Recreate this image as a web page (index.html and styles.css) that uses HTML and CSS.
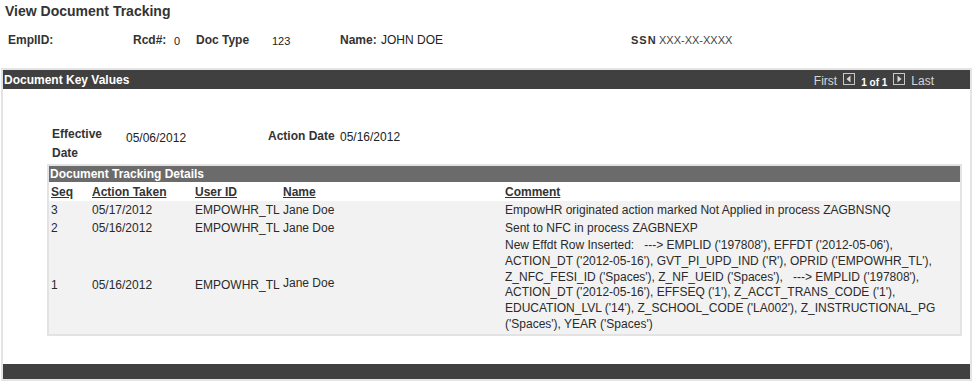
FILE: index.html
```html
<!DOCTYPE html>
<html>
<head>
<meta charset="utf-8">
<title>View Document Tracking</title>
<link rel="stylesheet" href="styles.css">
</head>
<body>
<div class="title">View Document Tracking</div>
<div class="keys">
  <span class="k w-emplid lbl">EmplID:</span>
  <span class="k w-rcd lbl">Rcd#:</span>
  <span class="k w-rcdv val sm">0</span>
  <span class="k w-doc lbl">Doc Type</span>
  <span class="k w-docv val sm">123</span>
  <span class="k w-name lbl">Name:</span>
  <span class="k w-namev val">JOHN DOE</span>
  <span class="k w-ssn lbl ssn">SSN</span>
  <span class="k val ssnv">XXX-XX-XXXX</span>
</div>

<div class="panel">
  <div class="panel-head">
    <span class="panel-title">Document Key Values</span>
    <span class="pager">
      <span class="pg-link">First</span>
      <svg class="pg-icon" width="12" height="12" viewBox="0 0 12 12"><rect x="0.5" y="0.5" width="11" height="11" fill="#404040" stroke="#c8c8c8"/><polygon points="7.5,2.5 7.5,9.5 3.5,6" fill="#d8d8d8"/></svg>
      <span class="pg-count">1 of 1</span>
      <svg class="pg-icon" width="12" height="12" viewBox="0 0 12 12"><rect x="0.5" y="0.5" width="11" height="11" fill="#404040" stroke="#c8c8c8"/><polygon points="4.5,2.5 4.5,9.5 8.5,6" fill="#d8d8d8"/></svg>
      <span class="pg-link">Last</span>
    </span>
  </div>
  <div class="panel-body">
    <div class="dates">
      <div class="d-lbl">Effective Date</div>
      <div class="d-val">05/06/2012</div>
      <div class="d-lbl2">Action Date</div>
      <div class="d-val2">05/16/2012</div>
    </div>
    <div class="details">
      <div class="details-head">Document Tracking Details</div>
      <table class="grid">
        <colgroup>
          <col class="c-seq"><col class="c-act"><col class="c-user"><col class="c-name"><col>
        </colgroup>
        <thead>
          <tr><th>Seq</th><th>Action Taken</th><th>User ID</th><th>Name</th><th>Comment</th></tr>
        </thead>
        <tbody>
          <tr><td>3</td><td>05/17/2012</td><td>EMPOWHR_TL</td><td>Jane Doe</td><td>EmpowHR originated action marked Not Applied in process ZAGBNSNQ</td></tr>
          <tr><td>2</td><td>05/16/2012</td><td>EMPOWHR_TL</td><td>Jane Doe</td><td>Sent to NFC in process ZAGBNEXP</td></tr>
          <tr><td>1</td><td>05/16/2012</td><td>EMPOWHR_TL</td><td><span class="up">Jane Doe</span></td><td class="comment">New Effdt Row Inserted: &nbsp; ---&gt; EMPLID ('197808'), EFFDT ('2012-05-06'),<br>ACTION_DT ('2012-05-16'), GVT_PI_UPD_IND ('R'), OPRID ('EMPOWHR_TL'),<br>Z_NFC_FESI_ID ('Spaces'), Z_NF_UEID ('Spaces'), &nbsp; ---&gt; EMPLID ('197808'),<br>ACTION_DT ('2012-05-16'), EFFSEQ ('1'), Z_ACCT_TRANS_CODE ('1'),<br>EDUCATION_LVL ('14'), Z_SCHOOL_CODE ('LA002'), Z_INSTRUCTIONAL_PG<br>('Spaces'), YEAR ('Spaces')</td></tr>
        </tbody>
      </table>
    </div>
  </div>
  <div class="panel-foot"></div>
</div>
</body>
</html>
```
FILE: styles.css
```css
body {
  margin: 0;
  font-family: "Liberation Sans", Arial, sans-serif;
  font-size: 12px;
  color: #333;
  background: #fff;
}
.title {
  font-size: 14px;
  font-weight: bold;
  line-height: 18px;
  padding: 2px 5px 0;
  color: #333;
}
.keys {
  display: flex;
  align-items: baseline;
  margin-top: 12px;
  padding-left: 8px;
  line-height: 16px;
}
.lbl { font-weight: bold; }
.val { color: #222; }
.sm { font-size: 11px; position: relative; top: 1px; }
.w-emplid { width: 125px; }
.w-rcd { width: 41px; }
.w-rcdv { width: 22px; }
.w-doc { width: 76px; }
.w-docv { width: 68px; }
.w-name { width: 41px; }
.w-namev { width: 250px; }
.w-ssn { width: 28px; }
.ssn { font-size: 11px; letter-spacing: 1px; }
.ssnv { font-size: 11px; color: #444; }

.panel {
  margin: 20px 3px 0 1px;
  border: 2px solid #e4e4e4;
}
.panel-head {
  background: #404040;
  height: 19px;
  display: flex;
  align-items: center;
  justify-content: space-between;
  color: #fff;
}
.panel-title {
  font-weight: bold;
  padding-left: 1px;
}
.pager {
  display: flex;
  align-items: center;
  gap: 6px;
  padding-right: 36px;
  padding-top: 2px;
}
.pg-link { color: #d6d6d6; font-size: 12px; }
.pg-count { color: #fff; font-weight: bold; font-size: 10px; padding-top: 3px; }
.pg-icon { display: block; margin-top: -3px; }

.panel-body {
  padding: 36px 8px 28px 44px;
}
.dates {
  display: grid;
  grid-template-columns: 74px 142px 72px 1fr;
  line-height: 19px;
  padding-left: 5px;
}
.d-lbl { font-weight: bold; width: 60px; }
.d-lbl2 { font-weight: bold; padding-top: 2px; }
.d-val { padding-top: 4px; color: #222; }
.d-val2 { padding-top: 3px; color: #222; }

.details {
  margin-top: 1px;
  border: 2px solid #e3e3e3;
}
.details-head {
  background: #6b6b6b;
  color: #fff;
  font-weight: bold;
  line-height: 16px;
  padding-left: 1px;
}
.grid {
  width: 100%;
  border-collapse: collapse;
  table-layout: fixed;
}
.c-seq { width: 41px; }
.c-act { width: 103px; }
.c-user { width: 88px; }
.c-name { width: 222px; }
.grid th {
  text-align: left;
  font-weight: bold;
  text-decoration: underline;
  line-height: 16px;
  padding: 2px 2px 1px 2px;
  background: #fff;
  color: #333;
}
.grid td {
  background: #f2f2f2;
  line-height: 16px;
  padding: 1px 2px;
  vertical-align: middle;
  white-space: nowrap;
  color: #2a2a2a;
}
.grid td.comment {
  line-height: 15.8px;
  white-space: normal;
}
.up { position: relative; top: -2px; }
.panel-foot {
  background: #404040;
  height: 15px;
}
```
